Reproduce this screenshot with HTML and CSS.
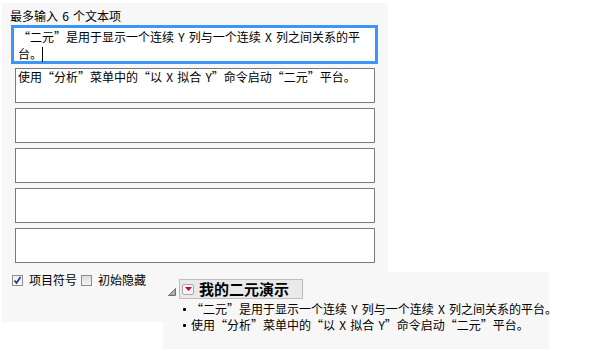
FILE: index.html
```html
<!DOCTYPE html>
<html lang="zh-CN">
<head>
  <meta charset="utf-8">
  <title>文本项</title>
  <link rel="stylesheet" href="styles.css">
</head>
<body>
  <!-- Editor panel with up to six text items -->
  <div class="editor">
    <div class="caption">最多输入 6 个文本项</div>
    <div class="item focused">“二元”是用于显示一个连续 Y 列与一个连续 X 列之间关系的平<br>台。<span class="caret"></span></div>
    <div class="item">使用“分析”菜单中的“以 X 拟合 Y”命令启动“二元”平台。</div>
    <div class="item"></div>
    <div class="item"></div>
    <div class="item"></div>
    <div class="item"></div>
    <div class="options">
      <label class="option"><span class="check on"><svg width="9" height="9" viewBox="0 0 9 9"><path d="M1.5 4.5 L3.5 7 L7.5 1" fill="none" stroke="#2a3d9a" stroke-width="1.8"/></svg></span>项目符号</label>
      <label class="option"><span class="check"></span>初始隐藏</label>
    </div>
  </div>

  <!-- Preview of the outline box, lies over the editor -->
  <div class="preview">
    <div class="outline-head">
      <svg class="disclosure" width="8" height="8" viewBox="0 0 8 8"><polygon points="7.5,0.5 7.5,7.5 0.5,7.5" fill="#b0b0b0" stroke="#6e6e6e" stroke-width="1"/></svg>
      <div class="title-btn">
        <span class="menu-icon"><svg width="7" height="4" viewBox="0 0 7 4"><polygon points="0,0 7,0 3.5,4" fill="#d0021b"/></svg></span>
        <span class="title">我的二元演示</span>
      </div>
    </div>
    <ul class="bullets">
      <li>“二元”是用于显示一个连续 Y 列与一个连续 X 列之间关系的平台。</li>
      <li>使用“分析”菜单中的“以 X 拟合 Y”命令启动“二元”平台。</li>
    </ul>
  </div>
</body>
</html>
```

FILE: styles.css
```css
/* Page */
body {
  margin: 0;
  background: #fff;
  font-family: "Noto Sans CJK SC", sans-serif;
  font-size: 12px;
  word-spacing: 1.5px;
  color: #000;
}

/* Editor panel */
.editor {
  margin: 3px 0 0 2px;
  width: 386px;
  height: 319px;
  background: #f7f7f7;
  box-sizing: border-box;
  padding: 4px 0 0 8px;
  display: flex;
  flex-direction: column;
  gap: 5px;
}
.caption { line-height: 17px; margin-bottom: -4px; }

.item {
  box-sizing: border-box;
  width: 360px;
  height: 35px;
  margin-left: 5px;
  border: 1px solid #7a7a7a;
  background: #fff;
  padding: 0 2px;
  line-height: 15px;
  white-space: nowrap;
}
.item.focused {
  width: 367px;
  height: 39px;
  margin-left: 1px;
  margin-bottom: -1px;
  border: 3px solid #3b97f5;
  padding: 0 4px;
  line-height: 17px;
}
.caret {
  display: inline-block;
  width: 1px;
  height: 15px;
  background: #000;
  vertical-align: -3px;
}

/* Checkbox row */
.options { display: flex; gap: 4px; margin-top: 5px; margin-left: 2px; line-height: 14px; }
.option { display: flex; align-items: center; gap: 6px; }
.check {
  box-sizing: border-box;
  width: 11px;
  height: 11px;
  border: 1px solid #8e8e8e;
  background: linear-gradient(#dcdcdc, #f4f4f4);
  display: flex;
  align-items: center;
  justify-content: center;
}
.check.on { background: linear-gradient(#f0f0f0, #fafafa); }

/* Preview panel over the editor */
.preview {
  position: absolute;
  left: 163px;
  top: 272px;
  width: 386px;
  height: 77px;
  background: #f7f7f7;
  box-sizing: border-box;
  padding: 7px 0 0 5px;
}
.outline-head { display: flex; align-items: center; gap: 3px; }
.disclosure { margin-top: 6px; }
.title-btn {
  box-sizing: border-box;
  height: 20px;
  width: 124px;
  border: 1px solid #bdbdbd;
  background: #e9e9e9;
  display: flex;
  align-items: center;
  padding-left: 2px;
  gap: 5px;
}
.menu-icon {
  box-sizing: border-box;
  width: 12px;
  height: 11px;
  border: 1px solid #a8a8a8;
  border-radius: 2px;
  background: #f4f4f4;
  display: flex;
  align-items: center;
  justify-content: center;
}
.title { font-size: 15px; font-weight: bold; line-height: 18px; word-spacing: 0; }

.bullets {
  list-style: none;
  margin: 2px 0 0 12px;
  padding: 0;
  line-height: 16px;
  white-space: nowrap;
}
.bullets li { position: relative; padding-left: 11px; }
.bullets li::before {
  content: "";
  position: absolute;
  left: 3px;
  top: 7px;
  width: 3px;
  height: 3px;
  border-radius: 1px;
  background: #000;
}
```
